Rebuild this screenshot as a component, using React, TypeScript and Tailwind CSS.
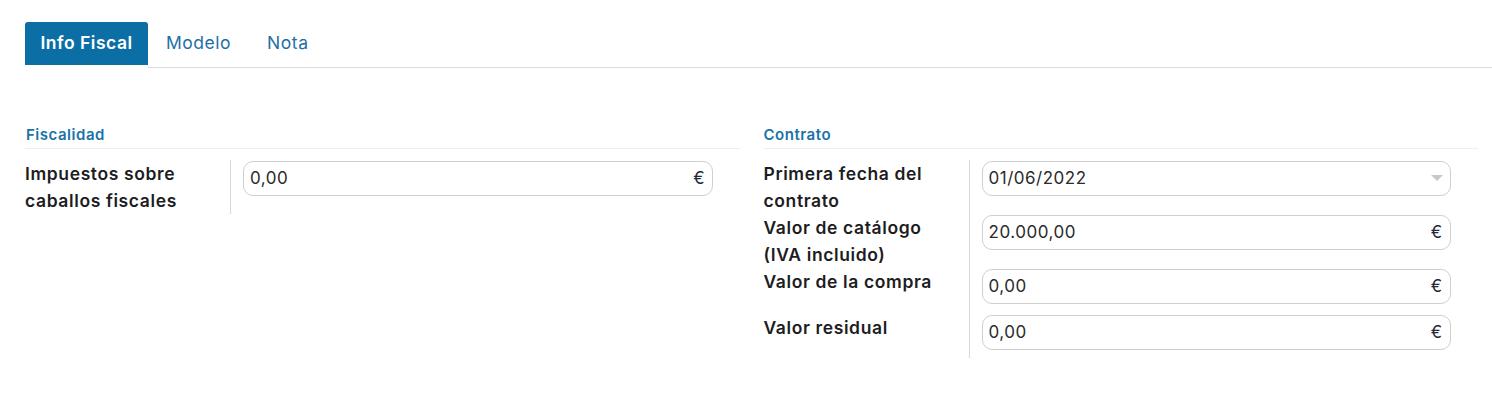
import React from "react";

const Euro = () => <span className="text-[17px] text-[#1f2937]">€</span>;

interface FieldProps {
  label: React.ReactNode;
  value: string;
  suffix?: React.ReactNode;
  rowClass?: string;
}

const Field: React.FC<FieldProps> = ({ label, value, suffix, rowClass }) => (
  <div className={`flex ${rowClass ?? ""}`}>
    <div className="w-[205px] shrink-0 pr-2 text-[17.5px] font-semibold leading-[27px] tracking-[0.035em] text-[#1d1d1f]">
      {label}
    </div>
    <div className="flex-1 border-l border-[#d8d8d8] pl-[12px] pr-[27px]">
      <div className="mt-[1px] flex h-[35px] items-center rounded-[10px] border border-[#cfcfcf] pl-[6px] pr-[7px] text-[17px] tracking-[0.03em] text-[#2b2b2b]">
        <span className="flex-1">{value}</span>
        {suffix}
      </div>
    </div>
  </div>
);

export default function App() {
  return (
    <div
      className="min-h-[406px] bg-white pt-[22px] pl-[25px]"
      style={{ fontFamily: "Inter, 'Noto Sans', sans-serif" }}
    >
      {/* tabs */}
      <div className="flex items-start">
        <div className="flex h-[43px] w-[123px] items-center justify-center rounded-t-[3px] bg-[#0b6fa6] text-[17.5px] font-semibold tracking-[0.03em] text-white">
          Info Fiscal
        </div>
        <div className="flex h-[46px] flex-1 items-start border-b border-[#dcdcdc]">
          <div className="flex h-[43px] items-center pl-[18px] pr-[36px] text-[17.5px] tracking-[0.03em] text-[#1f6fa5]">
            Modelo
          </div>
          <div className="flex h-[43px] items-center text-[17.5px] tracking-[0.03em] text-[#1f6fa5]">
            Nota
          </div>
        </div>
      </div>

      <div className="mt-[57px] grid grid-cols-2 gap-[24px] pr-[14px]">
        {/* Fiscalidad */}
        <div className="w-[715px]">
          <div className="border-b border-[#eeeeee] pb-[3px] pl-[1px] text-[15px] font-semibold leading-[20px] tracking-[0.035em] text-[#1a72a8]">
            Fiscalidad
          </div>
          <div className="mt-[11px]">
            <Field
              label={
                <>
                  Impuestos sobre
                  <br />
                  caballos fiscales
                </>
              }
              value="0,00"
              suffix={<Euro />}
            />
          </div>
        </div>

        {/* Contrato */}
        <div className="w-[714px]">
          <div className="border-b border-[#eeeeee] pb-[3px] text-[15px] font-semibold leading-[20px] tracking-[0.035em] text-[#1a72a8]">
            Contrato
          </div>
          <div className="mt-[11px]">
            <Field
              label={
                <>
                  Primera fecha del
                  <br />
                  contrato
                </>
              }
              value="01/06/2022"
              suffix={
                <svg width="12" height="7" viewBox="0 0 12 7">
                  <path d="M0 0 L12 0 L6 6 Z" fill="#c8c8c8" />
                </svg>
              }
            />
            <Field
              label={
                <>
                  Valor de catálogo
                  <br />
                  (IVA incluido)
                </>
              }
              value="20.000,00"
              suffix={<Euro />}
            />
            <Field
              label="Valor de la compra"
              value="0,00"
              suffix={<Euro />}
              rowClass="h-[46px]"
            />
            <Field
              label="Valor residual"
              value="0,00"
              suffix={<Euro />}
              rowClass="h-[44px]"
            />
          </div>
        </div>
      </div>
    </div>
  );
}
